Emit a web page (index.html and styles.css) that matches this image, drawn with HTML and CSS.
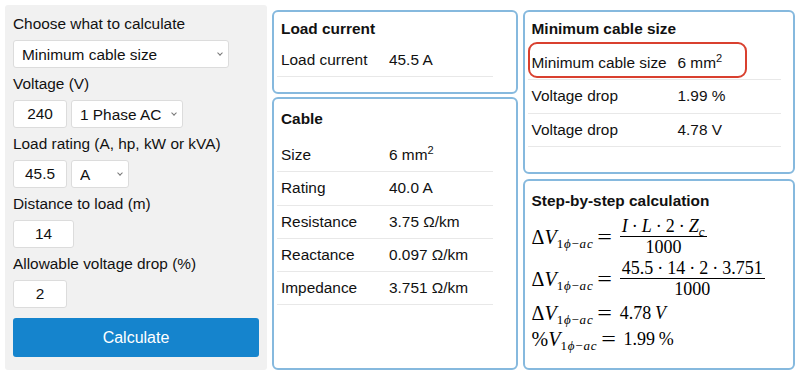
FILE: index.html
```html
<!DOCTYPE html>
<html lang="en">
<head>
    <meta charset="UTF-8">
    <meta name="viewport" content="width=device-width, initial-scale=1.0">
    <title>Cable Size Calculator</title>
    <link rel="stylesheet" href="styles.css">
</head>
<body>
    <div class="layout">
        <!-- Input form -->
        <div class="panel">
            <label class="field-label">Choose what to calculate</label>
            <div class="field-row">
                <div class="select-wrap select-mode">
                    <select>
                        <option>Minimum cable size</option>
                    </select>
                </div>
            </div>

            <label class="field-label">Voltage (V)</label>
            <div class="field-row">
                <input class="num-input" type="text" value="240">
                <div class="select-wrap select-phase">
                    <select>
                        <option>1 Phase AC</option>
                    </select>
                </div>
            </div>

            <label class="field-label">Load rating (A, hp, kW or kVA)</label>
            <div class="field-row">
                <input class="num-input" type="text" value="45.5">
                <div class="select-wrap select-unit">
                    <select>
                        <option>A</option>
                    </select>
                </div>
            </div>

            <label class="field-label">Distance to load (m)</label>
            <div class="field-row">
                <input class="num-input num-wide" type="text" value="14">
            </div>

            <label class="field-label">Allowable voltage drop (%)</label>
            <div class="field-row">
                <input class="num-input" type="text" value="2">
            </div>

            <button class="calc-btn">Calculate</button>
        </div>

        <!-- Middle column -->
        <div class="col col-mid">
            <div class="card card-load">
                <div class="card-title">Load current</div>
                <div class="result-table table-mid">
                    <div class="result-row">
                        <span>Load current</span>
                        <span>45.5 A</span>
                    </div>
                </div>
            </div>
            <div class="card card-fill card-cable">
                <div class="card-title">Cable</div>
                <div class="result-table table-mid">
                    <div class="result-row sup-row">
                        <span>Size</span>
                        <span>6 mm<sup>2</sup></span>
                    </div>
                    <div class="result-row">
                        <span>Rating</span>
                        <span>40.0 A</span>
                    </div>
                    <div class="result-row">
                        <span>Resistance</span>
                        <span>3.75 &Omega;/km</span>
                    </div>
                    <div class="result-row">
                        <span>Reactance</span>
                        <span>0.097 &Omega;/km</span>
                    </div>
                    <div class="result-row">
                        <span>Impedance</span>
                        <span>3.751 &Omega;/km</span>
                    </div>
                </div>
            </div>
        </div>

        <!-- Right column -->
        <div class="col col-right">
            <div class="card card-result">
                <div class="card-title">Minimum cable size</div>
                <div class="result-table table-right">
                    <div class="result-row sup-row highlight">
                        <span>Minimum cable size</span>
                        <span>6 mm<sup>2</sup></span>
                    </div>
                    <div class="result-row">
                        <span>Voltage drop</span>
                        <span>1.99 %</span>
                    </div>
                    <div class="result-row">
                        <span>Voltage drop</span>
                        <span>4.78 V</span>
                    </div>
                </div>
            </div>
            <div class="card card-fill card-steps">
                <div class="card-title">Step-by-step calculation</div>
                <div class="math">
                    <div class="eq">
                        <span class="lhs">&Delta;<i>V</i><sub>1<i>&#981;</i>&minus;<i>ac</i></sub><span class="eq-sign">=</span></span>
                        <span class="frac">
                            <span class="frac-num"><i>I</i><span class="op">&middot;</span><i>L</i><span class="op">&middot;</span>2<span class="op">&middot;</span><i>Z</i><sub><i>c</i></sub></span>
                            <span class="frac-den">1000</span>
                        </span>
                    </div>
                    <div class="eq">
                        <span class="lhs">&Delta;<i>V</i><sub>1<i>&#981;</i>&minus;<i>ac</i></sub><span class="eq-sign">=</span></span>
                        <span class="frac">
                            <span class="frac-num">45.5<span class="op">&middot;</span>14<span class="op">&middot;</span>2<span class="op">&middot;</span>3.751</span>
                            <span class="frac-den">1000</span>
                        </span>
                    </div>
                    <div class="eq">
                        <span class="lhs">&Delta;<i>V</i><sub>1<i>&#981;</i>&minus;<i>ac</i></sub><span class="eq-sign">=</span></span>
                        <span class="rhs">4.78&thinsp;<i>V</i></span>
                    </div>
                    <div class="eq">
                        <span class="lhs">%<i>V</i><sub>1<i>&#981;</i>&minus;<i>ac</i></sub><span class="eq-sign">=</span></span>
                        <span class="rhs">1.99&thinsp;%</span>
                    </div>
                </div>
            </div>
        </div>
    </div>
</body>
</html>
```

FILE: styles.css
```css
/* Global styles */
body {
    font-family: 'Liberation Sans', Arial, sans-serif;
    font-size: 15.4px;
    margin: 0;
    padding: 0;
    background: #fff;
    color: #111;
}

.layout {
    display: flex;
    align-items: stretch;
    gap: 5px;
    padding: 5px;
}

/* Left form panel */
.panel {
    width: 262px;
    flex: none;
    box-sizing: border-box;
    background: #f1f1f1;
    border-radius: 3px;
    padding: 9px 8px 13px;
    display: flex;
    flex-direction: column;
}
.field-label {
    display: block;
    line-height: 20px;
    margin-bottom: 6px;
}
.field-row {
    display: flex;
    gap: 4px;
    margin-bottom: 6px;
}
.num-input {
    width: 54px;
    height: 28px;
    box-sizing: border-box;
    border: 1px solid #dcdcdc;
    border-radius: 3px;
    background: #fff;
    font: inherit;
    color: #111;
    text-align: center;
    padding: 0;
}
.num-wide {
    width: 61px;
}
.select-wrap {
    position: relative;
    height: 28px;
}
.select-wrap select {
    appearance: none;
    -webkit-appearance: none;
    width: 100%;
    height: 100%;
    box-sizing: border-box;
    border: 1px solid #dcdcdc;
    border-radius: 3px;
    background: #fff;
    font: inherit;
    color: #111;
    padding: 0 16px 0 8px;
}
/* small chevron on the right of each select */
.select-wrap::after {
    content: '';
    position: absolute;
    right: 7px;
    top: 11px;
    width: 3px;
    height: 3px;
    border-right: 1px solid #777;
    border-bottom: 1px solid #777;
    transform: rotate(45deg);
    pointer-events: none;
}
.select-mode {
    width: 216px;
}
.select-phase {
    width: 112px;
}
.select-unit {
    width: 58px;
}
.calc-btn {
    margin-top: 4px;
    width: 100%;
    height: 39px;
    border: none;
    border-radius: 3px;
    background: #1584cd;
    color: #fff;
    font-family: 'Liberation Sans', Arial, sans-serif;
    font-size: 16px;
    cursor: pointer;
}

/* Result columns */
.col {
    display: flex;
    flex-direction: column;
    padding-top: 5px;
}
.col-mid {
    width: 246px;
    gap: 3px;
}
.col-right {
    width: 273px;
    gap: 5px;
}
.card {
    box-sizing: border-box;
    border: 2px solid #86b9de;
    border-radius: 6px;
    background: #fff;
    padding: 7px 3px;
}
.card-load {
    height: 84px;
}
.card-result {
    height: 164px;
}
.card-fill {
    flex: 1;
}
.card-cable,
.card-steps {
    padding-top: 10px;
}
.card-title {
    font-weight: bold;
    line-height: 20px;
    padding: 0 4px;
    margin-bottom: 5px;
}
.card-cable .card-title {
    margin-bottom: 7px;
}

.result-row {
    display: grid;
    align-items: baseline;
    padding: 7px 4px;
    line-height: 18.3px;
    border-bottom: 1px solid #e8e8e8;
    position: relative;
}
.sup-row {
    padding-top: 10px;
}
.table-mid {
    width: 216px;
}
.table-mid .result-row {
    grid-template-columns: 108px 1fr;
}
.table-right {
    width: 253px;
}
.table-right .result-row {
    grid-template-columns: 146px 1fr;
}
.result-row sup {
    font-size: 0.72em;
    line-height: 0;
}
/* red ring drawn round the main answer */
.highlight::before {
    content: '';
    position: absolute;
    left: 0;
    top: -2px;
    width: 219px;
    height: 36px;
    box-sizing: border-box;
    border: 2px solid #d9402f;
    border-radius: 9px;
}

/* Step-by-step maths */
.math {
    font-family: 'Liberation Serif', 'Times New Roman', serif;
    font-size: 18px;
    padding: 0 4px;
    color: #000;
}
.eq {
    display: flex;
    align-items: center;
    min-height: 26px;
}
.lhs {
    white-space: nowrap;
    font-size: 20px;
}
.math sub {
    font-size: 13px;
    vertical-align: -4px;
    line-height: 0;
    letter-spacing: 0.8px;
}
.eq-sign {
    display: inline-block;
    font-size: 20px;
    transform: scaleX(1.3);
    margin: 0 8px 0 6px;
}
.op {
    margin: 0 4px;
}
.frac {
    display: inline-flex;
    flex-direction: column;
    align-items: stretch;
    text-align: center;
    margin-left: 1px;
}
.frac-num {
    line-height: 20px;
    padding: 0 2px;
    border-bottom: 1px solid #000;
}
.frac-den {
    line-height: 21px;
}
.rhs {
    margin-left: 1px;
}
```
